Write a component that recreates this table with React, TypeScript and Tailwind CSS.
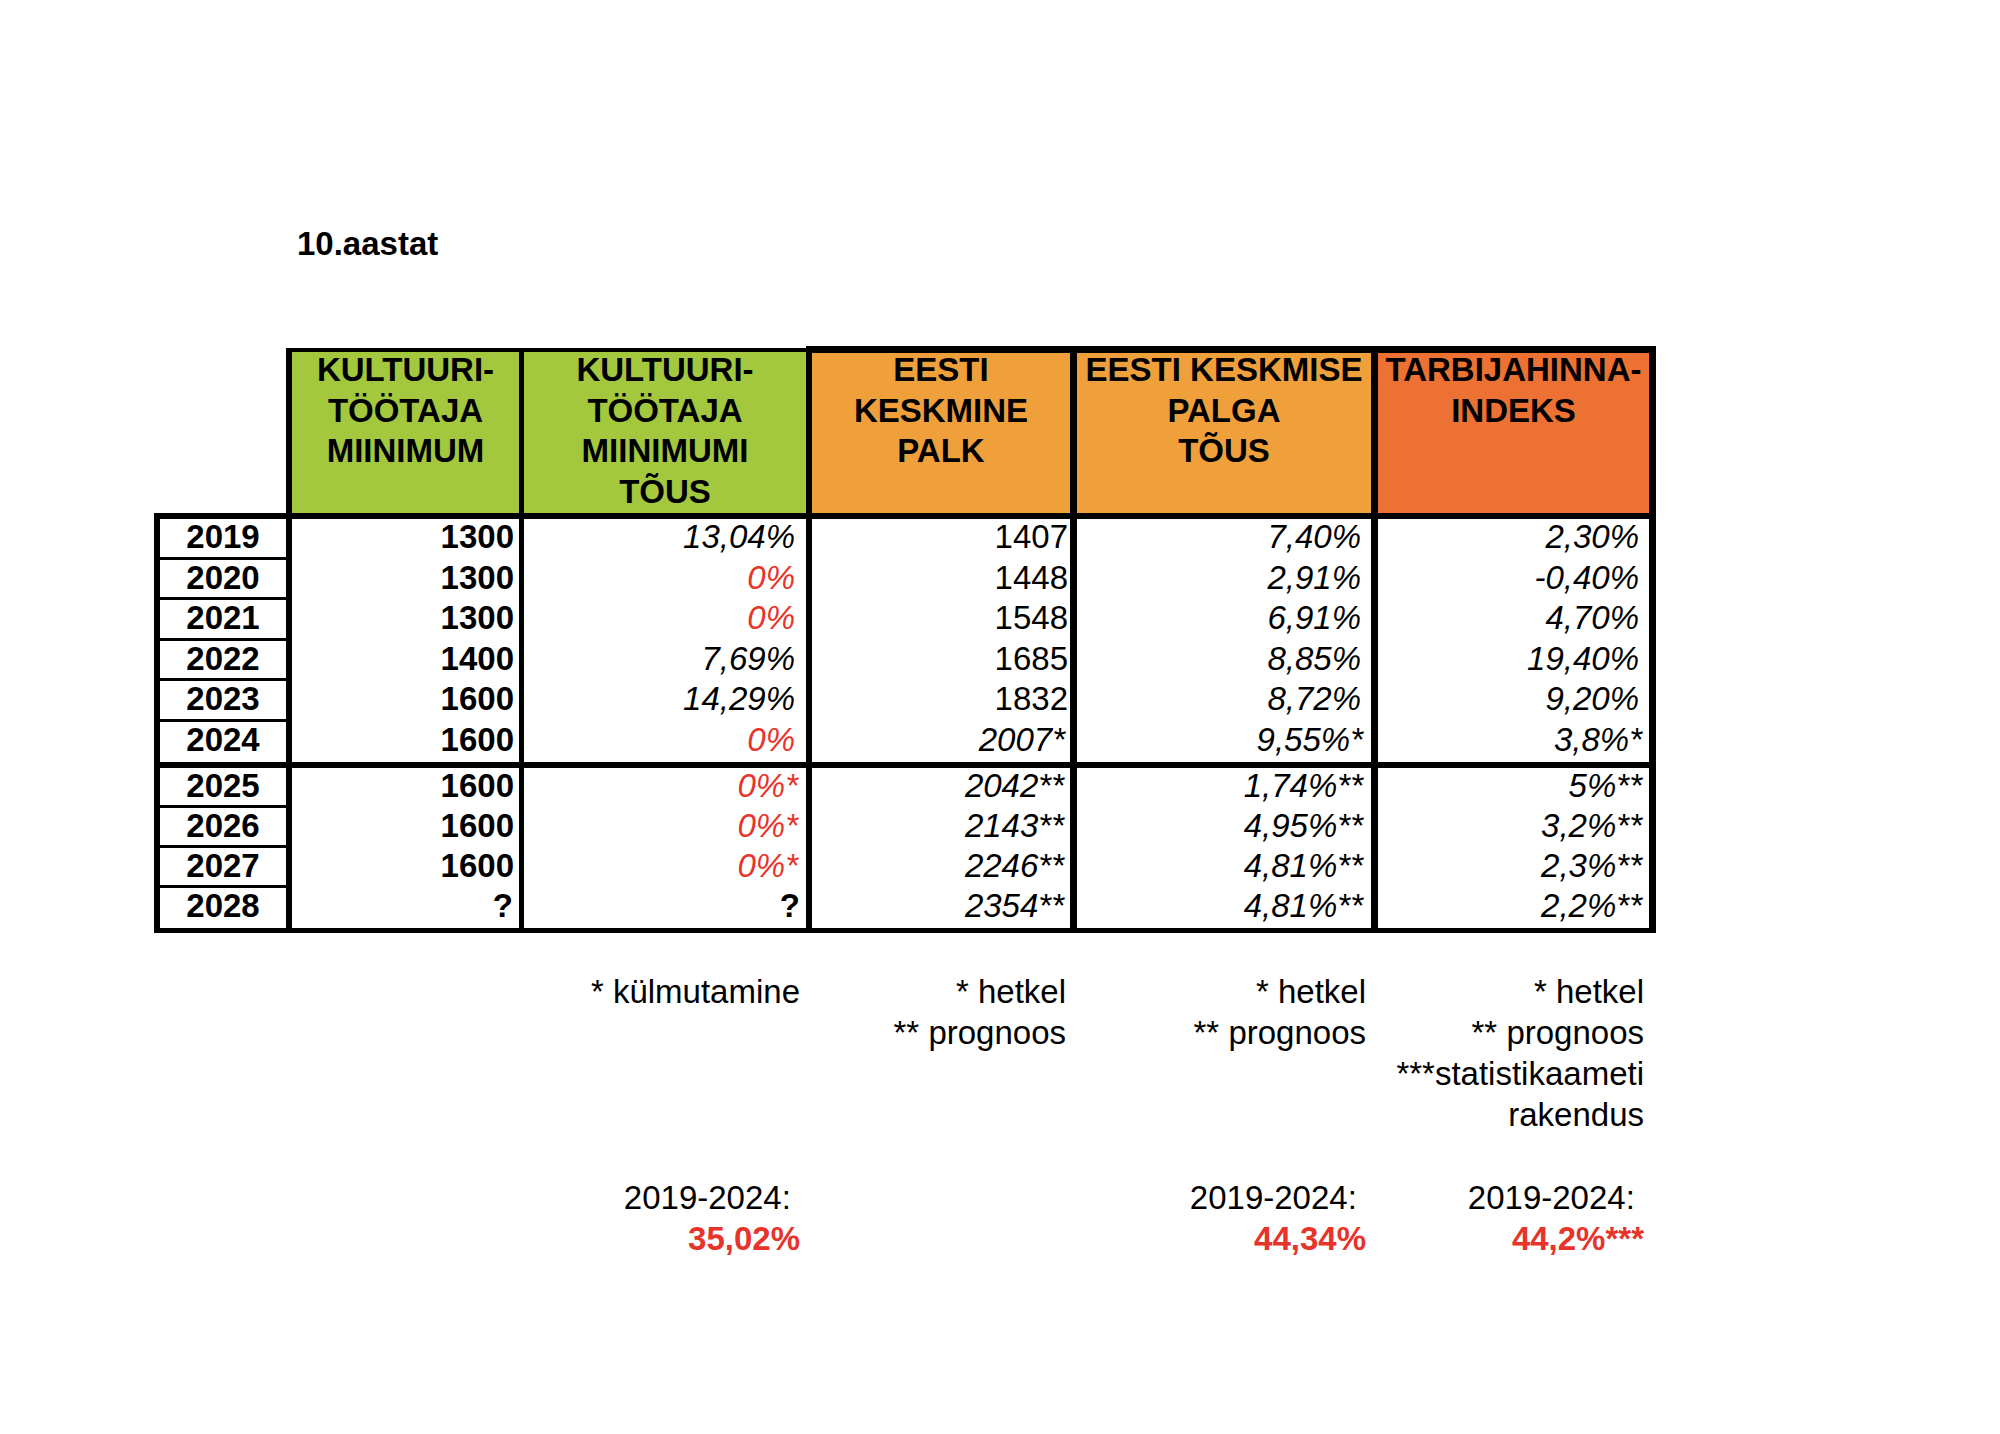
import React from "react";

type Cell = { t: string; cls: string };

const B1 = "font-bold pr-[5px]";
const Q1 = "font-bold pr-[6px]";
const P2 = "italic pr-[11px]";
const R2 = "italic text-[#e8332a] pr-[11px]";
const RS2 = "italic text-[#e8332a] pr-[8px]";
const Q2 = "font-bold pr-[6px]";
const N3 = "pr-[2px]";
const S3 = "italic pr-[5px]";
const SS3 = "italic pr-[6px]";
const P4 = "italic pr-[10px]";
const S4 = "italic pr-[8px]";
const P5 = "italic pr-[10px]";
const S5 = "italic pr-[7px]";

const block1: { y: string; c: Cell[] }[] = [
  { y: "2019", c: [{ t: "1300", cls: B1 }, { t: "13,04%", cls: P2 }, { t: "1407", cls: N3 }, { t: "7,40%", cls: P4 }, { t: "2,30%", cls: P5 }] },
  { y: "2020", c: [{ t: "1300", cls: B1 }, { t: "0%", cls: R2 }, { t: "1448", cls: N3 }, { t: "2,91%", cls: P4 }, { t: "-0,40%", cls: P5 }] },
  { y: "2021", c: [{ t: "1300", cls: B1 }, { t: "0%", cls: R2 }, { t: "1548", cls: N3 }, { t: "6,91%", cls: P4 }, { t: "4,70%", cls: P5 }] },
  { y: "2022", c: [{ t: "1400", cls: B1 }, { t: "7,69%", cls: P2 }, { t: "1685", cls: N3 }, { t: "8,85%", cls: P4 }, { t: "19,40%", cls: P5 }] },
  { y: "2023", c: [{ t: "1600", cls: B1 }, { t: "14,29%", cls: P2 }, { t: "1832", cls: N3 }, { t: "8,72%", cls: P4 }, { t: "9,20%", cls: P5 }] },
  { y: "2024", c: [{ t: "1600", cls: B1 }, { t: "0%", cls: R2 }, { t: "2007*", cls: S3 }, { t: "9,55%*", cls: S4 }, { t: "3,8%*", cls: S5 }] },
];

const block2: { y: string; c: Cell[] }[] = [
  { y: "2025", c: [{ t: "1600", cls: B1 }, { t: "0%*", cls: RS2 }, { t: "2042**", cls: SS3 }, { t: "1,74%**", cls: S4 }, { t: "5%**", cls: S5 }] },
  { y: "2026", c: [{ t: "1600", cls: B1 }, { t: "0%*", cls: RS2 }, { t: "2143**", cls: SS3 }, { t: "4,95%**", cls: S4 }, { t: "3,2%**", cls: S5 }] },
  { y: "2027", c: [{ t: "1600", cls: B1 }, { t: "0%*", cls: RS2 }, { t: "2246**", cls: SS3 }, { t: "4,81%**", cls: S4 }, { t: "2,3%**", cls: S5 }] },
  { y: "2028", c: [{ t: "?", cls: Q1 }, { t: "?", cls: Q2 }, { t: "2354**", cls: SS3 }, { t: "4,81%**", cls: S4 }, { t: "2,2%**", cls: S5 }] },
];

const colW = [
  "w-[233px] border-l-[6px]",
  "w-[287px] border-l-[5px]",
  "w-[264px] border-l-[6px]",
  "w-[301px] border-l-[7px]",
  "w-[285px] border-l-[7px] border-r-[7px]",
];

function Row({ y, c, line, h }: { y: string; c: Cell[]; line: boolean; h: string }) {
  return (
    <div className={`flex ${h}`}>
      <div className={`w-[132px] border-l-[6px] border-black box-border ${line ? "border-b-[3px]" : ""} text-center font-bold pt-[1px]`}>
        {y}
      </div>
      {c.map((cell, i) => (
        <div key={i} className={`${colW[i]} box-border border-black text-right pt-[1px] whitespace-nowrap`}>
          <span className={`block ${cell.cls}`}>{cell.t}</span>
        </div>
      ))}
    </div>
  );
}

function Head({ lines, cls, orange }: { lines: string[]; cls: string; orange: boolean }) {
  return (
    <div
      className={`${cls} box-border border-black ${orange ? "border-t-[7px] h-[167px]" : "border-t-4 h-[165px]"} text-center font-bold`}
    >
      <div className={`${orange ? "-mt-[3px]" : "-mt-[2px]"} leading-[40.7px]`}>
        {lines.map((l, i) => (
          <div key={i} className="whitespace-nowrap">
            {l}
          </div>
        ))}
      </div>
    </div>
  );
}

export default function App() {
  return (
    <div className="w-[2000px] h-[1434px] bg-white text-black font-['Liberation_Sans',Arial,sans-serif] text-[33px] overflow-hidden">
      <div className="pt-[223px] pl-[297px] font-bold leading-[41px]">10.aastat</div>

      <div className="pl-[154px] mt-[82px]">
        {/* header */}
        <div className="flex items-end">
          <div className="w-[132px]" />
          <Head cls={`${colW[0]} bg-[#a3c83e]`} orange={false} lines={["KULTUURI-", "TÖÖTAJA", "MIINIMUM"]} />
          <Head cls={`${colW[1]} bg-[#a3c83e]`} orange={false} lines={["KULTUURI-", "TÖÖTAJA", "MIINIMUMI", "TÕUS"]} />
          <Head cls={`${colW[2]} bg-[#f0a03b]`} orange lines={["EESTI", "KESKMINE", "PALK"]} />
          <Head cls={`${colW[3]} bg-[#f0a03b]`} orange lines={["EESTI KESKMISE", "PALGA", "TÕUS"]} />
          <Head cls={`${colW[4]} bg-[#ec7132]`} orange lines={["TARBIJAHINNA-", "INDEKS"]} />
        </div>

        {/* body */}
        <div className="w-[1502px] border-t-[6px] border-b-[5px] border-black leading-[33px]">
          {block1.map((r, i) => (
            <Row key={r.y} y={r.y} c={r.c} line={i < block1.length - 1} h="h-[40.5px]" />
          ))}
          <div className="h-[6px] bg-black" />
          {block2.map((r, i) => (
            <Row key={r.y} y={r.y} c={r.c} line={i < block2.length - 1} h="h-[40px]" />
          ))}
        </div>

        {/* footnotes */}
        <div className="flex mt-[38px] leading-[41px] text-right whitespace-pre">
          <div className="w-[132px]" />
          <div className="w-[233px]" />
          <div className="w-[287px] pr-[6px]">* külmutamine</div>
          <div className="w-[264px] pr-[4px]">
            <div>* hetkel</div>
            <div>** prognoos</div>
          </div>
          <div className="w-[301px] pr-[5px]">
            <div>* hetkel</div>
            <div>** prognoos</div>
          </div>
          <div className="w-[285px] pr-[12px]">
            <div>* hetkel</div>
            <div>** prognoos</div>
            <div>***statistikaameti</div>
            <div>rakendus</div>
          </div>
        </div>

        <div className="flex mt-[42px] leading-[41px] text-right whitespace-pre">
          <div className="w-[132px]" />
          <div className="w-[233px]" />
          <div className="w-[287px] pr-[6px]">
            <div>2019-2024: </div>
            <div className="font-bold text-[#e8332a]">35,02%</div>
          </div>
          <div className="w-[264px]" />
          <div className="w-[301px] pr-[5px]">
            <div>2019-2024: </div>
            <div className="font-bold text-[#e8332a]">44,34%</div>
          </div>
          <div className="w-[285px] pr-[12px]">
            <div>2019-2024: </div>
            <div className="font-bold text-[#e8332a]">44,2%***</div>
          </div>
        </div>
      </div>
    </div>
  );
}
